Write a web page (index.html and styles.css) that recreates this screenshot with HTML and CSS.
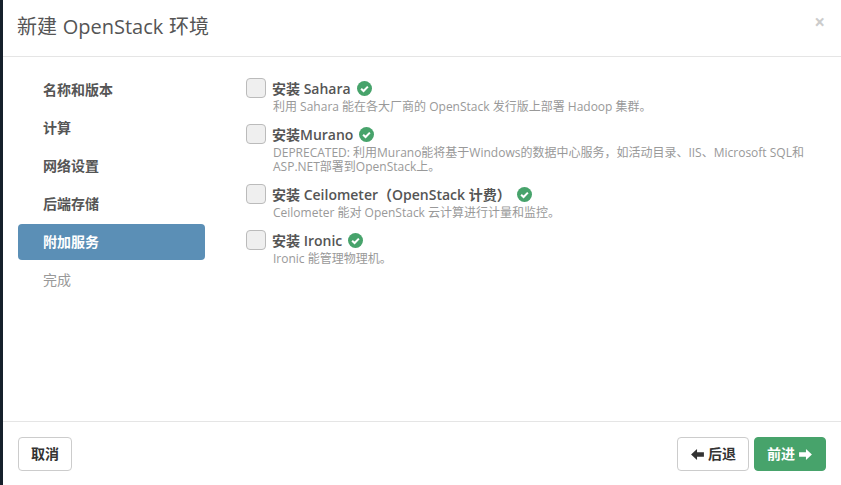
FILE: index.html
```html
<!DOCTYPE html>
<html lang="zh-CN">
<head>
    <meta charset="UTF-8">
    <title>新建 OpenStack 环境</title>
    <link rel="stylesheet" href="styles.css">
</head>
<body>
    <div class="modal">
        <div class="modal-header">
            <h1>新建 OpenStack 环境</h1>
            <span class="close">×</span>
        </div>
        <div class="modal-body">
            <ul class="steps">
                <li>名称和版本</li>
                <li>计算</li>
                <li>网络设置</li>
                <li>后端存储</li>
                <li class="active">附加服务</li>
                <li class="pending">完成</li>
            </ul>
            <div class="options">
                <div class="option">
                    <span class="checkbox"></span>
                    <div class="option-text">
                        <div class="option-title">
                            <span>安装 Sahara</span>
                            <svg class="ok" viewBox="0 0 16 16"><circle cx="8" cy="8" r="8" fill="#47a36b"/><path d="M4.4 8.2 7 10.7 11.6 6" fill="none" stroke="#fff" stroke-width="2.2"/></svg>
                        </div>
                        <p>利用 Sahara 能在各大厂商的 OpenStack 发行版上部署 Hadoop 集群。</p>
                    </div>
                </div>
                <div class="option">
                    <span class="checkbox"></span>
                    <div class="option-text">
                        <div class="option-title">
                            <span>安装Murano</span>
                            <svg class="ok" viewBox="0 0 16 16"><circle cx="8" cy="8" r="8" fill="#47a36b"/><path d="M4.4 8.2 7 10.7 11.6 6" fill="none" stroke="#fff" stroke-width="2.2"/></svg>
                        </div>
                        <p>DEPRECATED: 利用Murano能将基于Windows的数据中心服务，如活动目录、IIS、Microsoft SQL和ASP.NET部署到OpenStack上。</p>
                    </div>
                </div>
                <div class="option">
                    <span class="checkbox"></span>
                    <div class="option-text">
                        <div class="option-title">
                            <span>安装 Ceilometer<span class="paren">（</span>OpenStack 计费<span class="paren">）</span></span>
                            <svg class="ok" viewBox="0 0 16 16"><circle cx="8" cy="8" r="8" fill="#47a36b"/><path d="M4.4 8.2 7 10.7 11.6 6" fill="none" stroke="#fff" stroke-width="2.2"/></svg>
                        </div>
                        <p>Ceilometer 能对 OpenStack 云计算进行计量和监控。</p>
                    </div>
                </div>
                <div class="option">
                    <span class="checkbox"></span>
                    <div class="option-text">
                        <div class="option-title">
                            <span>安装 Ironic</span>
                            <svg class="ok" viewBox="0 0 16 16"><circle cx="8" cy="8" r="8" fill="#47a36b"/><path d="M4.4 8.2 7 10.7 11.6 6" fill="none" stroke="#fff" stroke-width="2.2"/></svg>
                        </div>
                        <p>Ironic 能管理物理机。</p>
                    </div>
                </div>
            </div>
        </div>
        <div class="modal-footer">
            <button class="btn">取消</button>
            <div class="nav-buttons">
                <button class="btn btn-back">
                    <svg class="arrow" viewBox="0 0 14 12"><path d="M0 6 6.5 0V3.5H14v5H6.5V12z" fill="currentColor"/></svg>
                    <span>后退</span>
                </button>
                <button class="btn btn-next">
                    <span>前进</span>
                    <svg class="arrow" viewBox="0 0 14 12"><path d="M14 6 7.5 0V3.5H0v5h7.5V12z" fill="currentColor"/></svg>
                </button>
            </div>
        </div>
    </div>
</body>
</html>
```

FILE: styles.css
```css
* {
    box-sizing: border-box;
}

html, body {
    height: 100%;
}

body {
    margin: 0;
    background-color: #16202b;
    font-family: "Open Sans", "Noto Sans CJK SC", sans-serif;
    color: #555;
    overflow: hidden;
}

.modal {
    height: 485px;
    margin-left: 3px;
    background-color: #fff;
    display: flex;
    flex-direction: column;
}

.modal-header {
    height: 57px;
    border-bottom: 1px solid #e5e5e5;
    padding: 0 15px 0 14px;
    display: flex;
    justify-content: space-between;
    align-items: flex-start;
}

.modal-header h1 {
    margin: 12px 0 0;
    font-size: 20px;
    line-height: 30px;
    font-weight: 400;
    word-spacing: 0.5px;
    color: #555;
}

.close {
    margin-top: 10px;
    margin-right: 1px;
    font-size: 19px;
    line-height: 24px;
    font-weight: 700;
    color: #ccc;
}

.modal-body {
    flex: 1;
    display: flex;
    padding: 15px 15px 0;
}

.steps {
    list-style: none;
    margin: 0;
    padding: 0;
    width: 187px;
    flex-shrink: 0;
}

.steps li {
    height: 36px;
    line-height: 35px;
    margin-bottom: 2px;
    padding-left: 25px;
    border-radius: 4px;
    font-size: 14px;
    font-weight: 700;
    color: #555;
}

.steps li.active {
    background-color: #5b8fb6;
    color: #fff;
}

.steps li.pending {
    font-weight: 400;
    color: #999;
}

.options {
    flex: 1;
    padding: 6px 20px 0 41px;
}

.option {
    display: flex;
    margin-bottom: 10px;
}

.checkbox {
    width: 20px;
    height: 20px;
    flex-shrink: 0;
    margin-right: 6px;
    border: 1px solid #bbb;
    border-radius: 4px;
    background-color: #efefef;
}

.option-text {
    flex: 1;
}

.option-title {
    font-size: 14px;
    line-height: 21px;
    font-weight: 600;
    color: #555;
    display: flex;
    align-items: center;
    gap: 6px;
}

.paren {
    font-family: "Noto Sans CJK TC", sans-serif;
}

.ok {
    width: 15px;
    height: 15px;
}

.option-text p {
    margin: 1px 0 0 1px;
    font-size: 12px;
    line-height: 14px;
    color: #999;
}

.modal-footer {
    height: 64px;
    border-top: 1px solid #e5e5e5;
    padding: 15px 15px 0;
    display: flex;
    justify-content: space-between;
    align-items: flex-start;
}

.nav-buttons {
    display: flex;
    gap: 5px;
}

.btn {
    height: 34px;
    padding: 0 12px 2px;
    border: 1px solid #ccc;
    border-radius: 4px;
    background-color: #fff;
    color: #333;
    font-family: inherit;
    font-size: 14px;
    font-weight: 600;
    display: flex;
    align-items: center;
    gap: 4px;
}

.btn-back {
    padding: 0 12px 2px 13px;
}

.btn-next {
    padding: 0 13px 2px 12px;
    background-color: #47a36b;
    border-color: #47a36b;
    color: #fff;
}

.arrow {
    width: 13px;
    height: 11px;
    margin-top: 2px;
}
```
